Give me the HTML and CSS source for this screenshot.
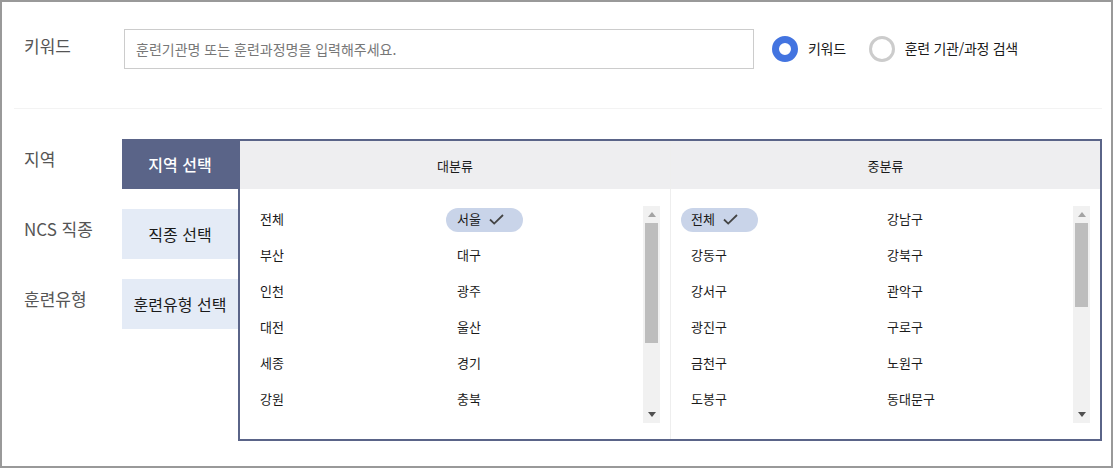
FILE: index.html
```html
<!DOCTYPE html>
<html lang="ko">
<head>
<meta charset="utf-8">
<title>검색</title>
<link rel="stylesheet" href="styles.css">
</head>
<body>
<div class="frame">
  <section class="keyword-row">
    <div class="field-label">키워드</div>
    <div class="fake-input">훈련기관명 또는 훈련과정명을 입력해주세요.</div>
    <div class="radios">
      <span class="radio on"></span><span class="radio-text first">키워드</span>
      <span class="radio"></span><span class="radio-text">훈련 기관/과정 검색</span>
    </div>
  </section>
  <section class="filter-row">
    <div class="labels">
      <div class="side-label">지역</div>
      <div class="side-label">NCS 직종</div>
      <div class="side-label">훈련유형</div>
    </div>
    <div class="tabs">
      <div class="tab active">지역 선택</div>
      <div class="tab">직종 선택</div>
      <div class="tab">훈련유형 선택</div>
    </div>
    <div class="panel">
      <div class="column">
        <div class="col-head">대분류</div>
        <div class="col-body">
          <ul class="options">
            <li><span class="opt">전체</span></li>
            <li><span class="opt selected">서울 <svg class="check" viewBox="0 0 15 11"><path d="M1 5.5 5.2 9.6 14 1" /></svg></span></li>
            <li><span class="opt">부산</span></li><li><span class="opt">대구</span></li>
            <li><span class="opt">인천</span></li><li><span class="opt">광주</span></li>
            <li><span class="opt">대전</span></li><li><span class="opt">울산</span></li>
            <li><span class="opt">세종</span></li><li><span class="opt">경기</span></li>
            <li><span class="opt">강원</span></li><li><span class="opt">충북</span></li>
          </ul>
          <div class="scrollbar"><span class="arrow up"></span><span class="track"><span class="thumb long"></span></span><span class="arrow down"></span></div>
        </div>
      </div>
      <div class="column second">
        <div class="col-head">중분류</div>
        <div class="col-body">
          <ul class="options">
            <li><span class="opt selected">전체 <svg class="check" viewBox="0 0 15 11"><path d="M1 5.5 5.2 9.6 14 1" /></svg></span></li>
            <li><span class="opt">강남구</span></li>
            <li><span class="opt">강동구</span></li><li><span class="opt">강북구</span></li>
            <li><span class="opt">강서구</span></li><li><span class="opt">관악구</span></li>
            <li><span class="opt">광진구</span></li><li><span class="opt">구로구</span></li>
            <li><span class="opt">금천구</span></li><li><span class="opt">노원구</span></li>
            <li><span class="opt">도봉구</span></li><li><span class="opt">동대문구</span></li>
          </ul>
          <div class="scrollbar"><span class="arrow up"></span><span class="track"><span class="thumb short"></span></span><span class="arrow down"></span></div>
        </div>
      </div>
    </div>
  </section>
</div>
</body>
</html>
```
FILE: styles.css
```css
* { box-sizing: border-box; }
html, body { margin: 0; padding: 0; background: #fff; }
body { font-family: "Noto Sans CJK KR", "Noto Sans", sans-serif; color: #222; }
.frame { width: 1113px; height: 468px; border: 2px solid #999; padding: 0 9px 0 12px; overflow: hidden; }

.keyword-row { height: 107px; border-bottom: 1px solid #f3f3f3; display: flex; align-items: flex-start; padding: 27px 0 0 10px; }
.field-label { width: 100px; font-size: 17px; line-height: 34px; color: #555; font-weight: 400; }
.fake-input { width: 630px; height: 40px; border: 1px solid #ccc; padding-left: 11px; font-size: 14px; line-height: 38px; color: #777; }
.radios { display: flex; align-items: center; height: 40px; margin-left: 18px; }
.radio { width: 26px; height: 26px; border-radius: 50%; border: 3px solid #ccc; background: #fff; }
.radio.on { border: 7px solid #4374e0; }
.radio-text { font-size: 14px; letter-spacing: -0.3px; color: #1a1a1a; margin-left: 10px; padding-bottom: 2px; }
.radio-text.first { margin-right: 23px; }

.filter-row { display: flex; align-items: flex-start; margin-top: 30px; }
.labels { width: 108px; padding: 3px 0 0 10px; }
.side-label { height: 70px; font-size: 17px; line-height: 34px; color: #555; }
.tabs { width: 116px; display: flex; flex-direction: column; gap: 20px; }
.tab { height: 50px; background: #e4ebf6; font-size: 16px; line-height: 50px; text-align: center; color: #1a1a1a; }
.tab.active { position: relative; z-index: 1; width: 118px; padding-right: 2px; background: #5a6488; color: #fff; font-weight: 500; }

.panel { width: 864px; height: 302px; border: 2px solid #5a6488; display: flex; }
.column { width: 430px; }
.column.second { border-left: 1px solid #eee; }
.col-head { height: 48px; background: #eeeef0; font-size: 13px; line-height: 49px; text-align: center; color: #1a1a1a; }
.col-body { display: flex; padding: 17px 10px 0 0; }
.options { list-style: none; margin: 0; padding: 2px 0 0 9px; flex: 1; display: grid; grid-template-columns: 197px 1fr; grid-auto-rows: 36px; align-content: start; }
.second .options { padding-left: 10px; grid-template-columns: 196px 1fr; }
.options li { display: flex; height: 24px; }
.opt { display: flex; align-items: center; gap: 8px; height: 24px; padding: 0 0 4px 11px; font-size: 13px; color: #1a1a1a; white-space: nowrap; }
.second .opt { padding-left: 10px; }
.opt.selected { width: 77px; border-radius: 12px; background: #c9d4e9; }
.check { width: 15px; height: 11px; margin-top: 3px; fill: none; stroke: #444; stroke-width: 1.8; }

.scrollbar { width: 17px; height: 217px; background: #f1f1f1; display: flex; flex-direction: column; align-items: center; }
.track { flex: 1; width: 13px; display: block; }
.thumb { display: block; width: 13px; background: #bdbdbd; }
.thumb.long { height: 120px; }
.thumb.short { height: 84px; }
.arrow { width: 0; height: 0; flex: none; border-left: 4px solid transparent; border-right: 4px solid transparent; }
.arrow.up { margin: 6px 0; border-bottom: 5px solid #a3a3a3; }
.arrow.down { margin: 0 0 6px; border-top: 5px solid #505050; }
```
